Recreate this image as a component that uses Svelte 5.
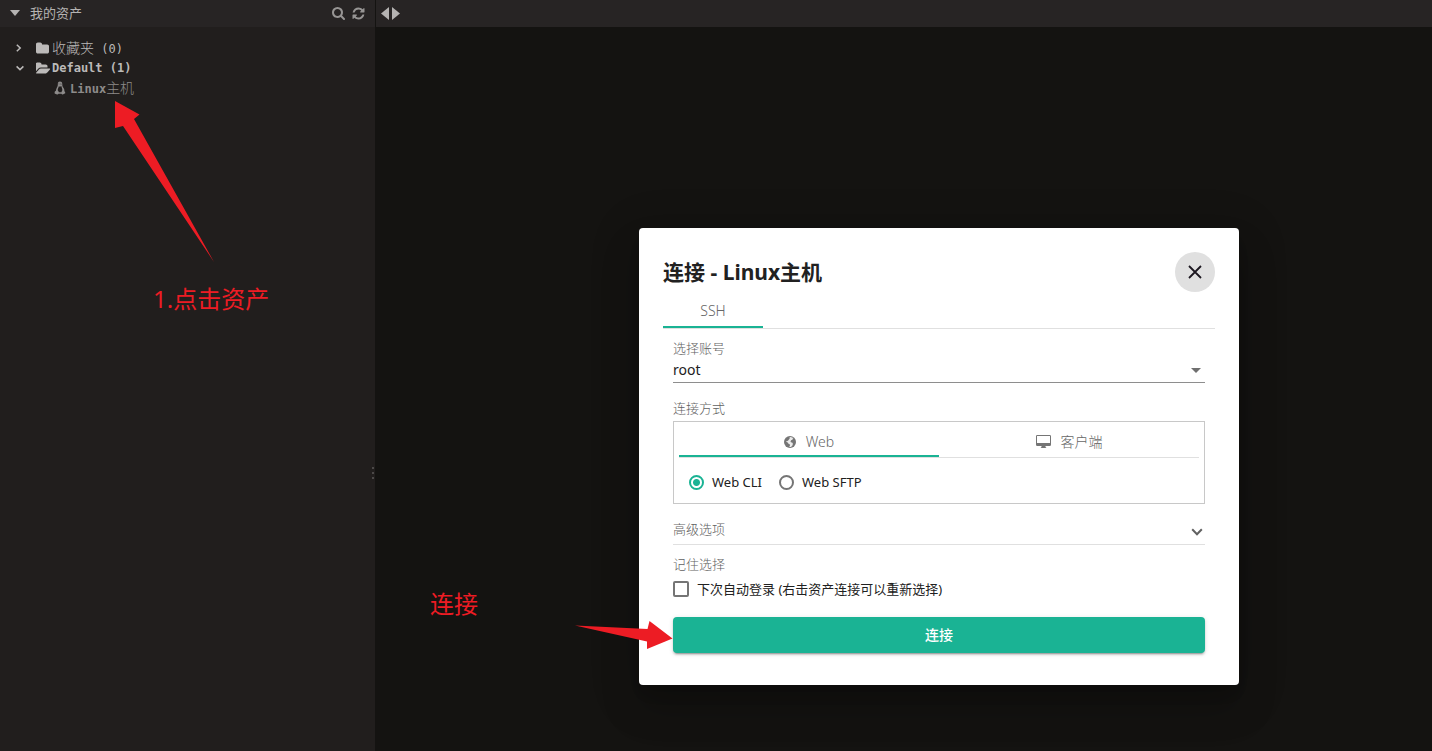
<script>
  let account = $state('root');
  let mode = $state('cli');
  let autoLogin = $state(false);

  const icons = {
    search: 'M1216 832q0-185-131.5-316.5t-316.5-131.5-316.5 131.5-131.5 316.5 131.5 316.5 316.5 131.5 316.5-131.5 131.5-316.5zm512 832q0 52-38 90t-90 38q-54 0-90-38l-343-342q-179 124-399 124-143 0-273.5-55.5t-225-150-150-225-55.5-273.5 55.5-273.5 150-225 225-150 273.5-55.5 273.5 55.5 225 150 150 225 55.5 273.5q0 220-124 399l343 343q37 37 37 90z',
    refresh: 'M1639 1056q0 5-1 7-64 268-268 434.5t-478 166.5q-146 0-282.5-55t-243.5-157l-129 129q-19 19-45 19t-45-19-19-45v-448q0-26 19-45t45-19h448q26 0 45 19t19 45-19 45l-137 137q71 66 161 102t187 36q134 0 250-65t186-179q11-17 53-117 8-23 30-23h192q13 0 22.5 9.5t9.5 22.5zm25-800v448q0 26-19 45t-45 19h-448q-26 0-45-19t-19-45 19-45l138-138q-148-137-349-137-134 0-250 65t-186 179q-11 17-53 117-8 23-30 23h-199q-13 0-22.5-9.5t-9.5-22.5v-7q65-268 270-434.5t480-166.5q146 0 284 55.5t245 156.5l130-129q19-19 45-19t45 19 19 45z',
    folder: 'M1728 608v704q0 92-66 158t-158 66h-1216q-92 0-158-66t-66-158v-960q0-92 66-158t158-66h320q92 0 158 66t66 158v32h672q92 0 158 66t66 158z',
    folderOpen: 'M1879 952q0 31-31 66l-336 396q-43 51-120.5 86.5t-143.5 35.5h-1088q-34 0-60.5-13t-26.5-43q0-31 31-66l336-396q43-51 120.5-86.5t143.5-35.5h1088q34 0 60.5 13t26.5 43zm-343-344v160h-832q-94 0-197 47.5t-164 119.5l-337 396-5 6q0-4-.5-12.5t-.5-12.5v-960q0-92 66-158t158-66h320q92 0 158 66t66 158v32h544q92 0 158 66t66 158z'
  };
</script>

<div class="page">
  <aside class="sidebar">
    <header class="bar side-bar">
      <svg class="caret" width="10" height="6" viewBox="0 0 10 6"><path d="M0 0h10L5 6z" /></svg>
      <h1>我的资产</h1>
      <button class="tool" aria-label="搜索">
        <svg width="13" height="13" viewBox="64 128 1664 1664"><path d={icons.search} /></svg>
      </button>
      <button class="tool" aria-label="刷新">
        <svg width="13" height="13" viewBox="64 64 1664 1664"><path d={icons.refresh} /></svg>
      </button>
    </header>

    <ul class="tree">
      <li>
        <svg class="angle" width="8" height="8" viewBox="0 0 8 8"><path d="M.8.8 4.200 4 .8 7.200" /></svg>
        <svg class="folder" width="15" height="13" viewBox="64 64 1920 1664"><path d={icons.folder} /></svg>
        <span><span class="han">收藏夹</span> (0)</span>
      </li>
      <li>
        <svg class="angle" width="8" height="8" viewBox="0 0 8 8"><path d="M.6 2.400 4 5.600 7.400 2.400" /></svg>
        <svg class="folder" width="15" height="13" viewBox="64 64 1920 1664"><path d={icons.folderOpen} /></svg>
        <span class="strong">Default (1)</span>
      </li>
      <li class="leaf">
        <svg class="tux" width="12" height="14" viewBox="0 0 12 14">
          <path fill-rule="evenodd" d="M6 .5C4.300 .5 3.700 1.700 3.800 3.300 3.900 5 3.400 5.600 2.700 6.900 2.200 7.900 2 8.800 1.900 9.700L.9 10.500C.3 11 .9 11.600.6 12.300.5 12.900 1.500 12.900 2.500 13.300 3.500 13.800 4.200 13.500 4.500 12.800H7.500C7.800 13.600 8.600 13.700 9.300 13.200L11.200 12.200C11.700 11.800 11 11.400 10.900 10.900L10.400 9.900C10.500 8.500 9.700 7.200 8.900 6 8.200 5 8.400 4.400 8.300 3 8.200 1.300 7.500.5 6 .5ZM4.900 5.200 6 5.700 7.200 5.100C7.700 6.500 8.500 8 8.300 9.600L7.900 9.900 7.500 11.300H4.900L4.700 10.700 3.700 9.200C3.700 7.600 4.500 6.500 4.900 5.200ZM4.600 2.800Q5.100 2.200 5.400 3.100L5 3.600ZM6.300 3Q6.900 2.200 7.400 3L7.200 3.700Z" />
        </svg>
        <span class="strong">Linux<span class="han">主机</span></span>
      </li>
    </ul>
    <div class="grip" aria-hidden="true"><i></i><i></i><i></i></div>
  </aside>

  <main class="workspace">
    <nav class="bar nav-bar">
      <button class="step" aria-label="上一个"><svg width="8" height="13" viewBox="0 0 8 13"><path d="M8 0v13L0 6.500z" /></svg></button>
      <button class="step" aria-label="下一个"><svg width="8" height="13" viewBox="0 0 8 13"><path d="M0 0v13l8-6.500z" /></svg></button>
    </nav>

    <div class="stage">
      <section class="dialog" role="dialog" aria-labelledby="dialog-title">
        <header class="dialog-head">
          <h2 id="dialog-title">连接 - Linux主机</h2>
          <button class="close" aria-label="关闭">
            <svg width="14" height="14" viewBox="0 0 14 14"><path d="M1 1 13 13M13 1 1 13" /></svg>
          </button>
        </header>

        <div class="tabs">
          <button class="tab protocol active">SSH</button>
        </div>

        <form class="form" onsubmit={(e) => e.preventDefault()}>
          <label class="label" for="account">选择账号</label>
          <div class="select">
            <select id="account" bind:value={account}>
              <option value="root">root</option>
            </select>
            <svg width="10" height="5" viewBox="0 0 10 5"><path d="M0 0h10L5 5z" /></svg>
          </div>

          <div class="label method-label" id="method">连接方式</div>
          <div class="method" role="group" aria-labelledby="method">
            <div class="tabs">
              <button type="button" class="tab wide active">
                <svg width="12" height="12" viewBox="0 0 12 12">
                  <circle cx="6" cy="6" r="6" />
                  <path class="cut" d="M6.200 1 8.300 1.500 9.400 2.400 8.200 2.900 8.700 3.900 7.400 4.100 6.500 5.200 6.900 6.300 8.500 6.700 8.900 8 8.300 9.800 6.900 10.900 5.200 11 5.900 9.700 6 8.500 4.500 7.700 3.700 6.600 2.600 6.100 2 4.900 3 5.200 4.200 4.600 4.900 3.400 5.900 2.500 5.200 1.900Z" />
                </svg>
                <span>Web</span>
              </button>
              <button type="button" class="tab wide">
                <svg width="15" height="13" viewBox="0 0 15 13">
                  <path fill-rule="evenodd" d="M1.300 0h12.400Q15 0 15 1.300v8.400Q15 11 13.700 11H9.500v1l1 1h-6l1-1v-1H1.300Q0 11 0 9.700V1.300Q0 0 1.300 0ZM1 1v7h13V1Z" />
                </svg>
                <span>客户端</span>
              </button>
            </div>
            <div class="radios">
              <label><input type="radio" name="mode" value="cli" bind:group={mode} />Web CLI</label>
              <label><input type="radio" name="mode" value="sftp" bind:group={mode} />Web SFTP</label>
            </div>
          </div>

          <button type="button" class="advanced">
            <span>高级选项</span>
            <svg width="12" height="8" viewBox="0 0 12 8"><path d="M1.200 1.300 6 6.200l4.800-4.900" /></svg>
          </button>

          <div class="label" id="remember">记住选择</div>
          <label class="check">
            <input type="checkbox" aria-describedby="remember" bind:checked={autoLogin} />
            下次自动登录 (右击资产连接可以重新选择)
          </label>

          <button class="submit">连接</button>
        </form>
      </section>
    </div>
  </main>

  <svg class="mark arrow-asset" width="100" height="162" viewBox="0 0 100 162" aria-hidden="true">
    <path d="M0 0 24.500 13.500 19 18 99 161 8 25 0 27z" />
  </svg>
  <p class="mark note-asset">1.点击资产</p>
  <svg class="mark arrow-connect" width="98" height="29" viewBox="0 0 98 29" aria-hidden="true">
    <path d="M0 4.500 72.500 8 74.500 0 97.500 17.500 72 28 72 20.500z" />
  </svg>
  <p class="mark note-connect">连接</p>
</div>

<style>
  :global(body) {
    background: #141311;
  }
  .page {
    position: relative;
    display: flex;
    min-height: 100vh;
    font-family: 'Noto Sans', 'Noto Sans CJK SC', sans-serif;
    font-size: 13px;
    line-height: 20px;
    color: #212121;
  }
  .page *,
  .page {
    box-sizing: border-box;
  }
  h1, h2, p, ul {
    margin: 0;
    padding: 0;
  }
  svg {
    display: block;
    flex: none;
    fill: currentColor;
  }
  button, select {
    padding: 0;
    border: 0;
    background: none;
    color: inherit;
    font: inherit;
    cursor: pointer;
  }
  .bar {
    display: flex;
    align-items: center;
    height: 27px;
    padding-bottom: 1px;
    background: #272424;
    color: #b5b3b2;
  }

  .sidebar {
    position: relative;
    flex: 0 0 375px;
    background: #211e1d;
  }
  .side-bar {
    gap: 7px;
    padding-left: 10px;
    padding-right: 10px;
  }
  .side-bar h1 {
    flex: 1;
    padding-left: 3px;
    font-size: 13px;
    font-weight: 400;
  }
  .tool {
    color: #979594;
  }
  .tree {
    padding: 11px 16px;
    list-style: none;
    font-family: 'DejaVu Sans Mono', 'Noto Sans CJK SC', monospace;
    font-size: 12px;
    color: #bcbab9;
  }
  .tree li {
    display: flex;
    align-items: center;
    height: 20px;
  }
  .angle {
    margin-right: 12px;
    fill: none;
    stroke: currentColor;
    stroke-width: 1.500;
  }
  .folder {
    margin-right: 1px;
  }
  .strong {
    font-weight: 700;
  }
  .han {
    font-size: 14px;
    font-weight: 300;
  }
  .tree .leaf {
    gap: 4px;
    padding-left: 38px;
    color: #8d8b8a;
  }
  .grip {
    position: absolute;
    top: calc(50% + 91px);
    right: 1px;
    display: grid;
    gap: 3px;
  }
  .grip i {
    width: 2px;
    height: 2px;
    background: #4c4948;
  }

  .workspace {
    display: flex;
    flex: 1;
    flex-direction: column;
    min-width: 0;
    border-left: 1px solid #141311;
  }
  .nav-bar {
    gap: 3px;
    padding-left: 5px;
    padding-right: 5px;
  }
  .stage {
    display: flex;
    flex: 1;
    align-items: center;
    justify-content: center;
    padding: 135px 0 0 70px;
  }
  .dialog {
    width: 100%;
    max-width: 600px;
    padding: 24px 24px 32px;
    border-radius: 4px;
    background: #fff;
    box-shadow: 0 11px 15px -7px rgba(0, 0, 0, 0.2), 0 24px 38px 3px rgba(0, 0, 0, 0.14), 0 9px 46px 8px rgba(0, 0, 0, 0.12);
  }
  .dialog-head {
    display: flex;
    align-items: center;
    justify-content: space-between;
  }
  .dialog-head h2 {
    font-size: 21px;
    font-weight: 700;
  }
  .close {
    display: grid;
    place-items: center;
    width: 40px;
    height: 40px;
    border-radius: 50%;
    background: #e0e0e0;
  }
  .close svg {
    stroke: #1c1720;
    stroke-width: 1.800;
  }

  .tabs {
    display: flex;
    border-bottom: 1px solid #e0e0e0;
  }
  .tab {
    display: flex;
    align-items: center;
    justify-content: center;
    gap: 10px;
    height: 36px;
    padding-top: 4px;
    border-bottom: 2px solid transparent;
    font-size: 14px;
    font-weight: 300;
    color: #666;
  }
  .tab.active {
    border-color: #1ab394;
  }
  .protocol {
    width: 100px;
  }
  .wide {
    flex: 1;
    height: 35px;
    padding-top: 6px;
  }
  .wide svg {
    color: #757575;
  }

  .form {
    padding: 9px 10px 0;
  }
  .label {
    display: block;
    font-weight: 300;
    color: #616161;
  }
  .select {
    display: flex;
    align-items: center;
    border-bottom: 1px solid #8e8e8e;
  }
  .select select {
    flex: 1;
    height: 24px;
    appearance: none;
    font-size: 14px;
  }
  .select svg {
    margin: 0 4px 0 -14px;
    color: #6f6f6f;
    pointer-events: none;
  }
  .method-label {
    margin: 15px 0 3px;
  }
  .method {
    padding: 0 5px;
    border: 1px solid #c8c8c8;
  }
  .radios {
    display: flex;
    gap: 17px;
    padding: 14px 10px 11px;
  }
  .radios label,
  .check {
    display: flex;
    align-items: center;
    gap: 8px;
  }
  .radios input {
    width: 15px;
    height: 15px;
    margin: 0;
    border: 2px solid #757575;
    border-radius: 50%;
    appearance: none;
  }
  .radios input:checked {
    border-color: #1ab394;
    background: radial-gradient(circle, #1ab394 3px, #fff 4px);
  }
  .advanced {
    display: flex;
    align-items: flex-start;
    justify-content: space-between;
    width: 100%;
    height: 41px;
    margin-bottom: 9px;
    padding: 15px 2px 0 0;
    border-bottom: 1px solid #e0e0e0;
    font-weight: 300;
    color: #616161;
  }
  .advanced svg {
    margin-top: 9px;
    fill: none;
    stroke: currentColor;
    stroke-width: 2;
  }
  .check {
    margin: 5px 0 18px;
  }
  .check input {
    width: 16px;
    height: 16px;
    margin: 0;
    border: 2px solid #757575;
    border-radius: 2px;
    appearance: none;
  }
  .check input:checked {
    border-color: #1ab394;
    background: #1ab394;
  }
  .cut {
    fill: #fff;
    opacity: 0.85;
  }
  .submit {
    display: block;
    width: 100%;
    height: 36px;
    border-radius: 4px;
    background: #1ab394;
    box-shadow: 0 3px 1px -2px rgba(0, 0, 0, 0.2), 0 2px 2px rgba(0, 0, 0, 0.14), 0 1px 5px rgba(0, 0, 0, 0.12);
    color: #fff;
    font-size: 14px;
    font-weight: 500;
  }

  /* Callouts drawn over the interface */
  .mark {
    position: absolute;
    color: #ed1c24;
    pointer-events: none;
  }
  p.mark {
    font-size: 24px;
    line-height: 32px;
  }
  .arrow-asset {
    top: 101px;
    left: 115px;
  }
  .note-asset {
    top: 283px;
    left: 153px;
  }
  .arrow-connect {
    top: 621px;
    left: 575px;
  }
  .note-connect {
    top: 588px;
    left: 430px;
  }
</style>
